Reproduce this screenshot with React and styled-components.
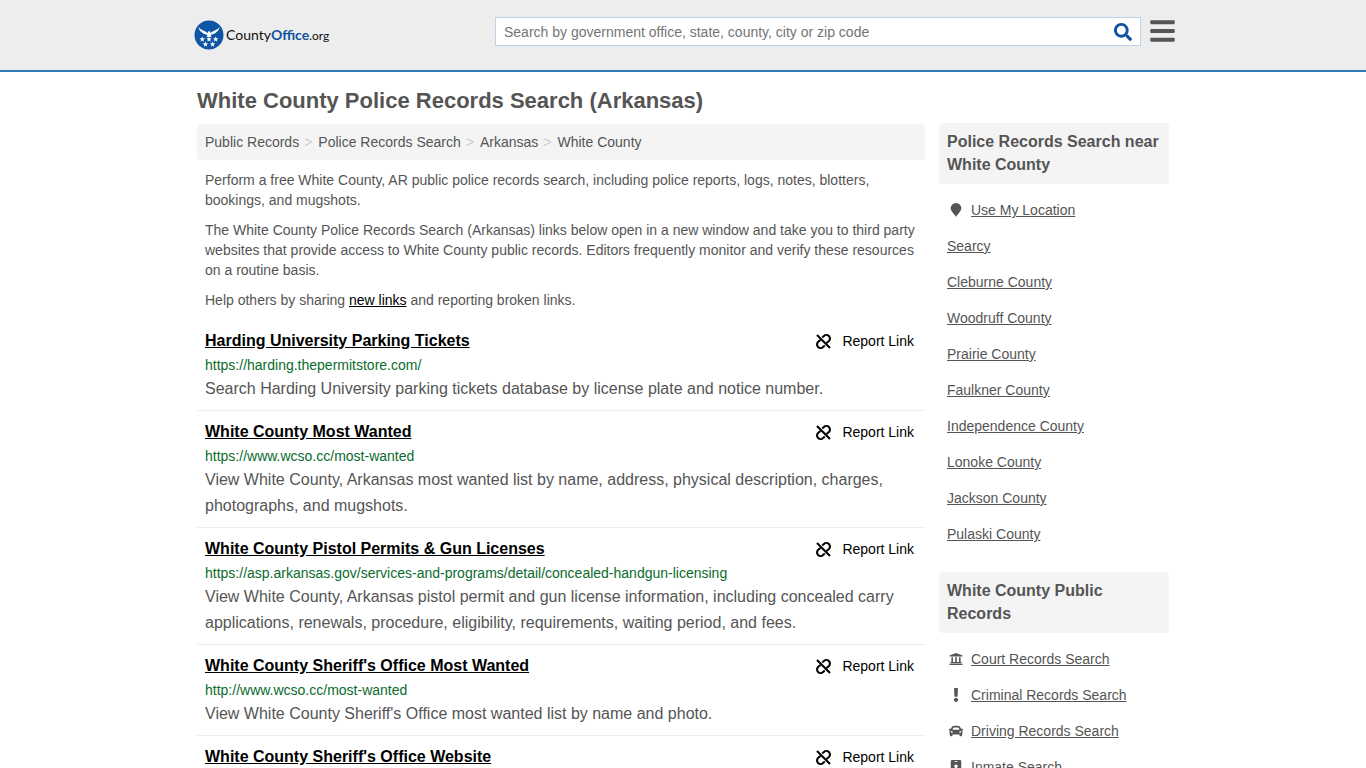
import React from "react";
import styled, { createGlobalStyle } from "styled-components";
import { FaSearch, FaBars, FaExclamation, FaCar, FaIdBadge } from "react-icons/fa";

const GlobalStyle = createGlobalStyle`
  * {
    box-sizing: border-box;
  }

  body {
    margin: 0;
    background: #fff;
    color: #555;
    font-family: "Liberation Sans", Arial, Helvetica, sans-serif;
    font-size: 14px;
    line-height: 20px;
  }
`;

const Header = styled.header`
  background: #ededed;
  border-bottom: 2px solid #337ab7;
`;

const HeaderInner = styled.div`
  display: flex;
  align-items: flex-start;
  max-width: 984px;
  min-height: 70px;
  margin: 0 auto;
  padding-top: 17px;
`;

const LogoLink = styled.a`
  display: flex;
  align-items: center;
  gap: 2px;
  flex: 1;
  padding: 3px;
  color: #111;
  text-decoration: none;
`;

const LogoText = styled.span`
  font-family: Lato, "Liberation Sans", sans-serif;
  font-size: 14px;

  b {
    color: #0f52a0;
  }

  small {
    font-size: 12px;
  }
`;

const SearchForm = styled.form`
  display: flex;
  width: 646px;
  height: 29px;
  margin-right: 9px;
  background: #fff;
  border: 1px solid #bcd3e8;
`;

const SearchInput = styled.input`
  flex: 1;
  padding: 0 8px;
  border: 0;
  outline: 0;
  background: transparent;
  font: inherit;

  &::placeholder {
    color: #757575;
    opacity: 1;
  }
`;

const IconButton = styled.button`
  display: flex;
  align-items: center;
  justify-content: center;
  width: ${(props) => props.$width}px;
  height: 27px;
  padding: 0;
  border: 0;
  background: transparent;
  color: ${(props) => props.$color};
`;

const Page = styled.div`
  display: flex;
  flex-wrap: wrap;
  column-gap: 14px;
  max-width: 972px;
  margin: 0 auto;
`;

const Title = styled.h1`
  width: 100%;
  margin: 15px 0 7px;
  font-size: 22px;
  line-height: 28px;
`;

const Main = styled.main`
  flex: 1;
  min-width: 0;
  padding-top: 2px;
`;

const Sidebar = styled.aside`
  width: 230px;
  padding-top: 1px;
`;

const Breadcrumbs = styled.nav`
  display: flex;
  gap: 5px;
  padding: 8px;
  background: #f4f4f4;
  border-radius: 4px;

  a {
    color: #555;
    text-decoration: none;
  }

  span {
    padding-right: 1px;
    color: #ccc;
  }
`;

const Intro = styled.div`
  padding: 0 8px;

  p {
    margin: 10px 0;
  }

  a {
    color: #000;
  }
`;

const Listing = styled.article`
  padding: 9px 8px 8px;
  border-bottom: 1px solid #eee;
`;

const ListingHead = styled.div`
  display: flex;
  justify-content: space-between;
  align-items: center;
  padding-right: 3px;
`;

const ListingTitle = styled.h2`
  margin: 0;
  font-size: 16px;
  line-height: 24px;

  a {
    color: #000;
  }
`;

const ReportLink = styled.a`
  display: flex;
  align-items: center;
  gap: 10px;
  color: #000;
  text-decoration: none;
`;

const Url = styled.a`
  display: block;
  padding-top: 1px;
  line-height: 22px;
  color: #0a6b2d;
  text-decoration: none;
`;

const Description = styled.p`
  margin: 0;
  font-size: 16px;
  line-height: 26px;
`;

const SideTitle = styled.h2`
  margin: 0 0 8px;
  padding: 7px 8px 8px;
  background: #f4f4f4;
  border-radius: 4px;
  font-size: 16px;
  line-height: 23px;
`;

const SideList = styled.ul`
  margin: 0 0 20px;
  padding: 0;
  list-style: none;
`;

const SideItem = styled.li`
  display: flex;
  align-items: center;
  gap: 6px;
  padding: 8px;

  a {
    color: #555;
  }

  svg {
    width: 18px;
  }
`;

const crumbs = ["Public Records", "Police Records Search", "Arkansas", "White County"];

const listings = [
  {
    title: "Harding University Parking Tickets",
    url: "https://harding.thepermitstore.com/",
    text: "Search Harding University parking tickets database by license plate and notice number.",
  },
  {
    title: "White County Most Wanted",
    url: "https://www.wcso.cc/most-wanted",
    text: "View White County, Arkansas most wanted list by name, address, physical description, charges, photographs, and mugshots.",
  },
  {
    title: "White County Pistol Permits & Gun Licenses",
    url: "https://asp.arkansas.gov/services-and-programs/detail/concealed-handgun-licensing",
    text: "View White County, Arkansas pistol permit and gun license information, including concealed carry applications, renewals, procedure, eligibility, requirements, waiting period, and fees.",
  },
  {
    title: "White County Sheriff's Office Most Wanted",
    url: "http://www.wcso.cc/most-wanted",
    text: "View White County Sheriff's Office most wanted list by name and photo.",
  },
  {
    title: "White County Sheriff's Office Website",
  },
];

const places = [
  "Searcy",
  "Cleburne County",
  "Woodruff County",
  "Prairie County",
  "Faulkner County",
  "Independence County",
  "Lonoke County",
  "Jackson County",
  "Pulaski County",
];

const STAR = "M0-2.9.7-1 2.8-.9 1.1.4 1.7 2.4 0 1.2-1.7 2.4-1.1.4-2.8-.9-.7-1z";

const Seal = () => (
  <svg width="30" height="30" viewBox="0 0 30 30" aria-hidden="true">
    <circle cx="15" cy="15" r="14.5" fill="#0f55a5" />
    <g fill="#fff">
      <path d="M4.5 7C6 9 8.500 10.500 11 11.200L13.500 13 14.500 11.300 16 11.200 16.500 13 19 11.200C21.500 10.500 24 9 25.500 7 25.200 9.500 24 11 22.500 12L21.500 13 20 13.700 18 14.500 16.500 15 17.500 17H12.500L13.500 15 12 14.500 10 13.700 8.500 13 7.500 12C6 11 4.800 9.500 4.500 7z" />
      <path d={STAR} transform="translate(8.3 19.3)" />
      <path d={STAR} transform="translate(15 19.3)" />
      <path d={STAR} transform="translate(21.7 19.3)" />
      <path d={STAR} transform="translate(11.4 24.3)" />
      <path d={STAR} transform="translate(18.6 24.3)" />
    </g>
  </svg>
);

const BrokenLinkIcon = () => (
  <svg width="17" height="17" viewBox="0 0 24 24" fill="none" stroke="currentColor" strokeWidth="2.9" aria-hidden="true">
    <path d="M2.800 2.800 21.200 21.200" />
    <path d="M10.200 6.300 12.600 4.300A4.800 4.800 0 0 1 19.700 11.200L16.300 14.200" />
    <path d="M13.800 17.700 11.400 19.700A4.800 4.800 0 0 1 4.300 12.800L7.700 9.800" />
  </svg>
);

const PinIcon = () => (
  <svg height="14" viewBox="0 0 18 14" fill="currentColor" aria-hidden="true">
    <path d="M9 0a5.300 5.300 0 0 1 5.300 5.300c0 3-3.600 5.700-5.300 8.700-1.700-3-5.300-5.700-5.300-8.700a5.300 5.300 0 0 1 5.300-5.300z" />
  </svg>
);

const CourtIcon = () => (
  <svg height="14" viewBox="0 0 18 14" fill="currentColor" aria-hidden="true">
    <path d="M9 1 15.500 3.500V4.600H2.500V3.500zM4.400 5.200H6V10H4.400zM8.200 5.200H9.800V10H8.200zM12 5.200H13.600V10H12zM3.500 10H14.500V11.200H3.500zM2.500 11.700H15.500V13H2.500z" />
  </svg>
);

const records = [
  { name: "Court Records Search", icon: <CourtIcon /> },
  { name: "Criminal Records Search", icon: <FaExclamation size={14} /> },
  { name: "Driving Records Search", icon: <FaCar size={14} /> },
  { name: "Inmate Search", icon: <FaIdBadge size={14} /> },
];

const App = () => {
  return (
    <>
      <GlobalStyle />
      <Header>
        <HeaderInner>
          <LogoLink href="#">
            <Seal />
            <LogoText>
              County<b>Office</b>
              <small>.org</small>
            </LogoText>
          </LogoLink>
          <SearchForm>
            <SearchInput
              aria-label="Search"
              placeholder="Search by government office, state, county, city or zip code"
            />
            <IconButton type="submit" aria-label="Search" $width={34} $color="#0f52a0">
              <FaSearch size={18} />
            </IconButton>
          </SearchForm>
          <IconButton type="button" aria-label="Menu" $width={25} $color="#555">
            <FaBars size={28} />
          </IconButton>
        </HeaderInner>
      </Header>
      <Page>
        <Title>White County Police Records Search (Arkansas)</Title>
        <Main>
          <Breadcrumbs aria-label="Breadcrumb">
            {crumbs.map((crumb, index) => (
              <React.Fragment key={crumb}>
                {index > 0 && <span>&gt;</span>}
                <a href="#">{crumb}</a>
              </React.Fragment>
            ))}
          </Breadcrumbs>
          <Intro>
            <p>
              Perform a free White County, AR public police records search, including police reports, logs, notes,
              blotters, bookings, and mugshots.
            </p>
            <p>
              The White County Police Records Search (Arkansas) links below open in a new window and take you to third
              party websites that provide access to White County public records. Editors frequently monitor and verify
              these resources on a routine basis.
            </p>
            <p>
              Help others by sharing <a href="#">new links</a> and reporting broken links.
            </p>
          </Intro>
          {listings.map((listing) => (
            <Listing key={listing.title}>
              <ListingHead>
                <ListingTitle>
                  <a href="#">{listing.title}</a>
                </ListingTitle>
                <ReportLink href="#">
                  <BrokenLinkIcon />
                  Report Link
                </ReportLink>
              </ListingHead>
              {listing.url && <Url href={listing.url}>{listing.url}</Url>}
              {listing.text && <Description>{listing.text}</Description>}
            </Listing>
          ))}
        </Main>
        <Sidebar>
          <SideTitle>Police Records Search near White County</SideTitle>
          <SideList>
            <SideItem>
              <PinIcon />
              <a href="#">Use My Location</a>
            </SideItem>
            {places.map((place) => (
              <SideItem key={place}>
                <a href="#">{place}</a>
              </SideItem>
            ))}
          </SideList>
          <SideTitle>White County Public Records</SideTitle>
          <SideList>
            {records.map((record) => (
              <SideItem key={record.name}>
                {record.icon}
                <a href="#">{record.name}</a>
              </SideItem>
            ))}
          </SideList>
        </Sidebar>
      </Page>
    </>
  );
};

export default App;
